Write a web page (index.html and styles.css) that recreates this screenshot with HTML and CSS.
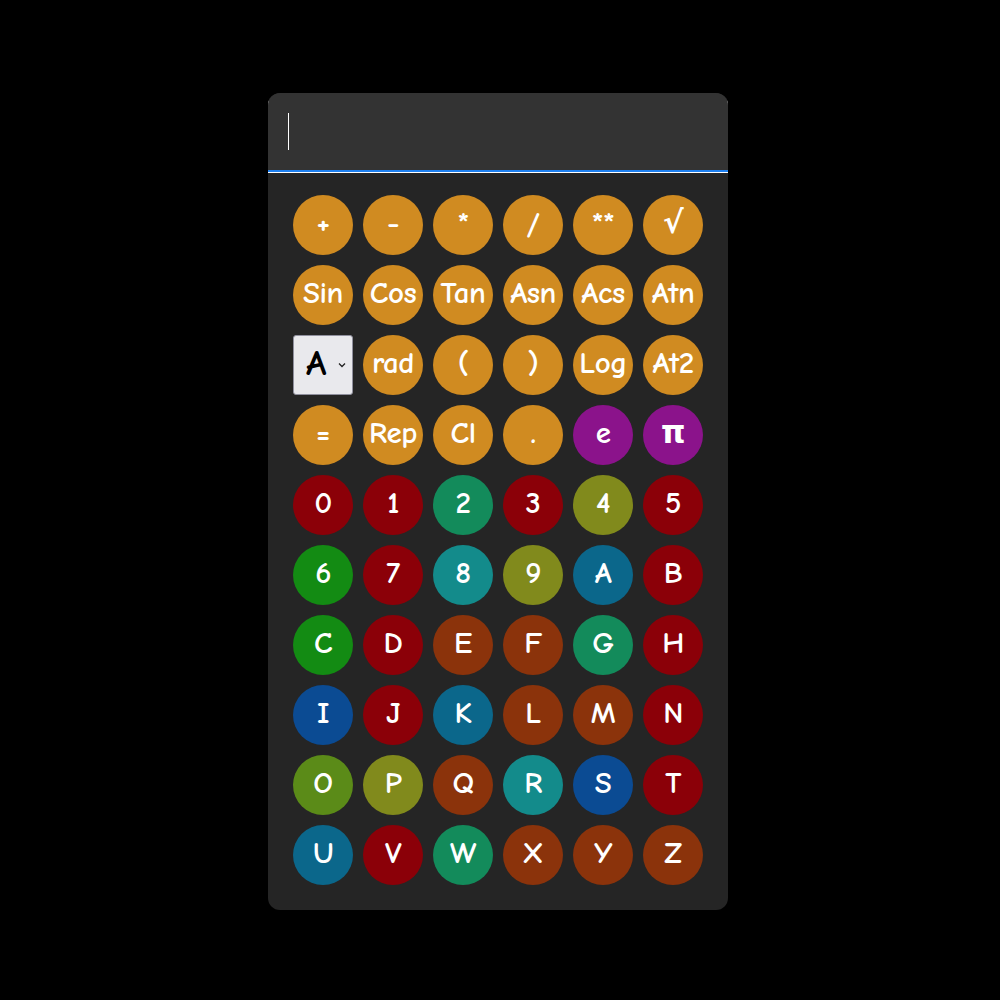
FILE: index.html
```html
<!DOCTYPE html>
<html>
<head>
<meta charset="utf-8">
<link rel="stylesheet" href="styles.css">
</head>
<body>
<div class="calc">
  <div class="display"><span class="caret"></span></div>
  <div class="keys">
    <div class="key op">+</div><div class="key op">-</div><div class="key op">*</div><div class="key op">/</div><div class="key op">**</div><div class="key op">√</div>
    <div class="key op">Sin</div><div class="key op">Cos</div><div class="key op">Tan</div><div class="key op">Asn</div><div class="key op">Acs</div><div class="key op">Atn</div>
    <div class="select"><span class="sel-text">A</span><svg class="chev" width="8" height="6" viewBox="0 0 8 6"><path d="M1 1.5 L4 4.5 L7 1.5" fill="none" stroke="#222" stroke-width="1.3"/></svg></div>
    <div class="key op">rad</div><div class="key op">(</div><div class="key op">)</div><div class="key op">Log</div><div class="key op">At2</div>
    <div class="key op">=</div><div class="key op">Rep</div><div class="key op">Cl</div><div class="key op">.</div><div class="key purple">e</div><div class="key purple">π</div>
    <div class="key red">0</div><div class="key red">1</div><div class="key sea">2</div><div class="key red">3</div><div class="key olive">4</div><div class="key red">5</div>
    <div class="key green">6</div><div class="key red">7</div><div class="key teal">8</div><div class="key olive">9</div><div class="key steel">A</div><div class="key red">B</div>
    <div class="key green">C</div><div class="key red">D</div><div class="key brown">E</div><div class="key brown">F</div><div class="key sea">G</div><div class="key red">H</div>
    <div class="key blue">I</div><div class="key red">J</div><div class="key steel">K</div><div class="key brown">L</div><div class="key brown">M</div><div class="key red">N</div>
    <div class="key ygreen">O</div><div class="key olive">P</div><div class="key brown">Q</div><div class="key teal">R</div><div class="key blue">S</div><div class="key red">T</div>
    <div class="key steel">U</div><div class="key red">V</div><div class="key sea">W</div><div class="key brown">X</div><div class="key brown">Y</div><div class="key brown">Z</div>
  </div>
</div>
</body>
</html>
```
FILE: styles.css
```css
html, body {
  margin: 0;
  padding: 0;
  background: #000;
}
body {
  width: 1000px;
  height: 1000px;
  padding: 93px 0 0 268px;
  box-sizing: border-box;
  font-family: "Comic Sans MS", "Comic Neue", "DejaVu Sans", sans-serif;
}
.calc {
  width: 460px;
  height: 817px;
  background: #252525;
  border-radius: 12px;
  overflow: hidden;
  display: flex;
  flex-direction: column;
}
.display {
  height: 79px;
  flex: none;
  background: #333333;
  border-bottom: 2px solid #1e80f0;
  box-shadow: 0 1px 0 #ffffff;
  display: flex;
  align-items: flex-start;
  padding: 20px 0 0 20px;
  box-sizing: border-box;
}
.caret {
  display: block;
  width: 1px;
  height: 37px;
  background: #ffffff;
}
.keys {
  margin-top: 23px;
  padding: 0 25px;
  display: grid;
  grid-template-columns: repeat(6, 60px);
  grid-auto-rows: 60px;
  gap: 10px;
}
.key {
  width: 60px;
  height: 60px;
  border-radius: 50%;
  color: #fff;
  font-weight: bold;
  font-size: 31px;
  display: flex;
  align-items: center;
  justify-content: center;
  letter-spacing: -0.5px;
  padding-bottom: 5px;
  box-sizing: border-box;
  white-space: nowrap;
}
.select {
  width: 60px;
  height: 60px;
  box-sizing: border-box;
  background: #e9e9ed;
  border: 1px solid #8f8f9d;
  border-radius: 3px;
  display: flex;
  align-items: center;
  padding-left: 12px;
}
.sel-text {
  font-size: 37px;
  font-weight: bold;
  color: #000;
  width: 25px;
  margin-bottom: 4px;
}
.chev {
  margin-left: 7px;
}
.op { background: #d08b21; }
.purple { background: #8b138b; }
.red { background: #8b0008; }
.sea { background: #138b5b; }
.olive { background: #818a1c; }
.green { background: #138b13; }
.teal { background: #138b8b; }
.steel { background: #0b678b; }
.brown { background: #8b330b; }
.blue { background: #0b4b93; }
.ygreen { background: #5b8b18; }
```
